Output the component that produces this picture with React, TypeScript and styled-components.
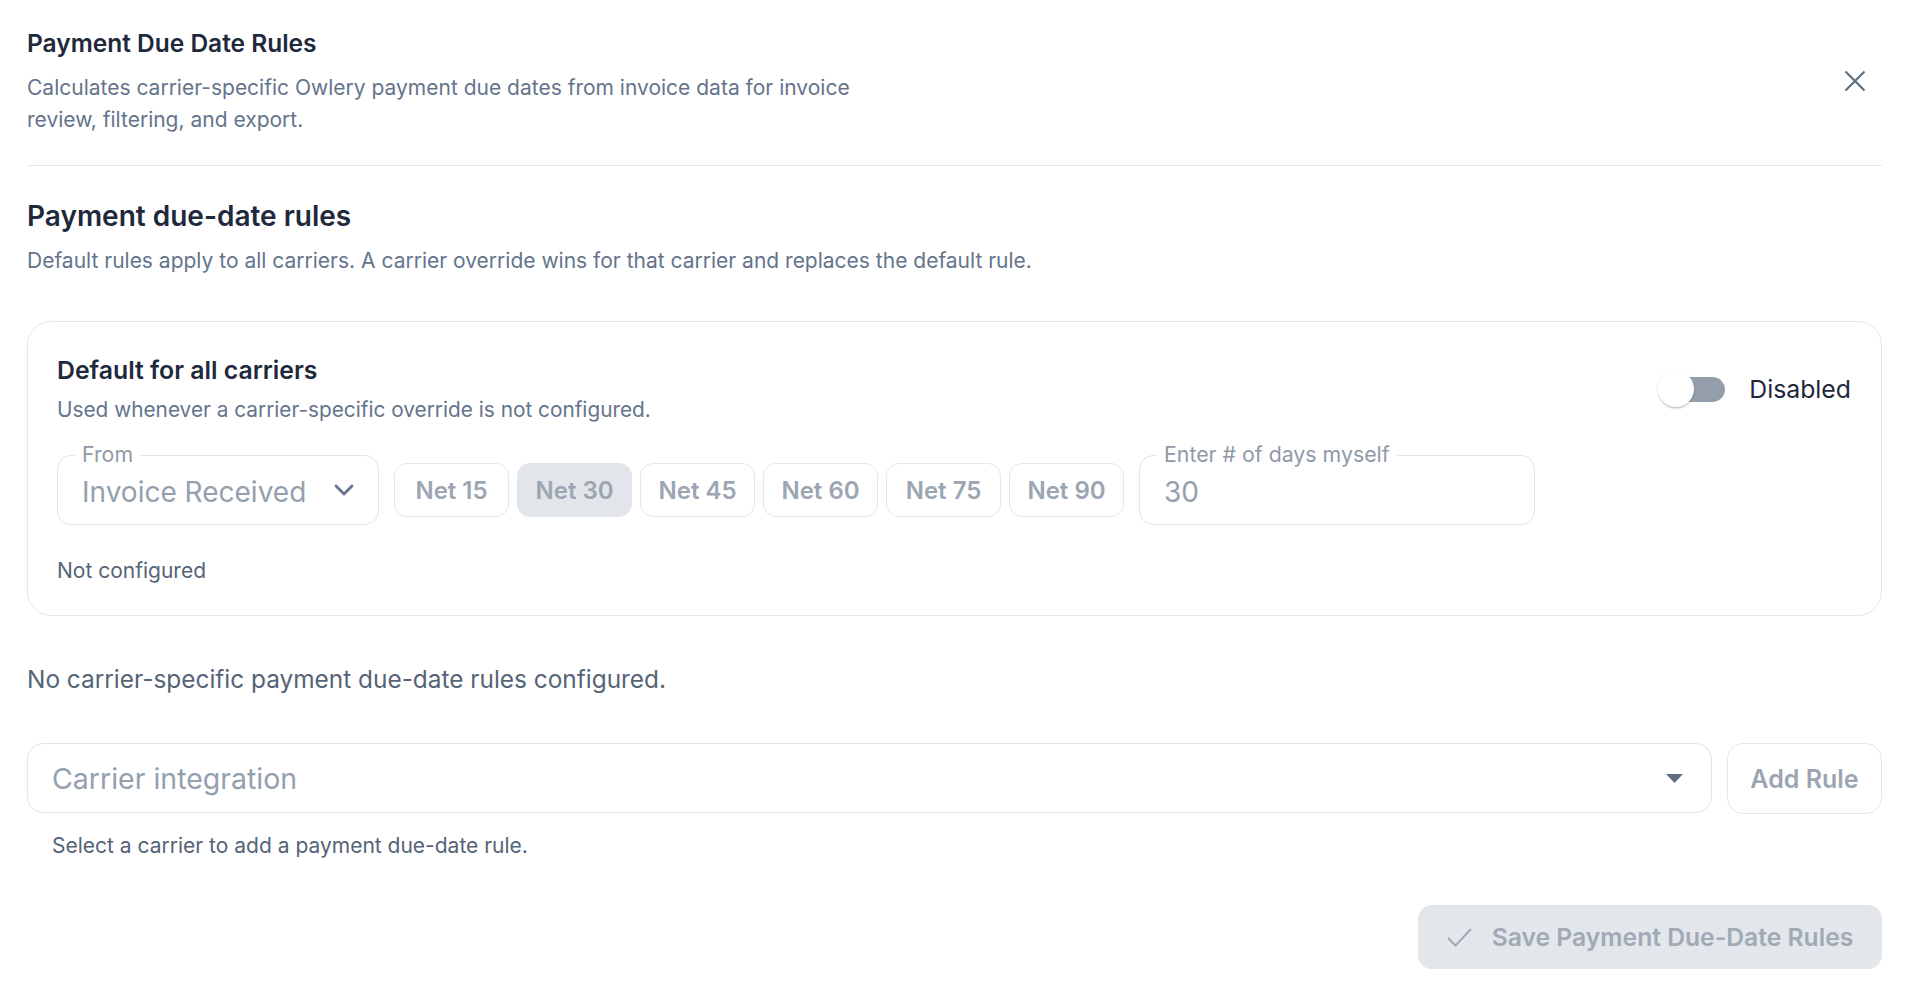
import React from 'react';
import styled, { createGlobalStyle } from 'styled-components';

const GlobalStyle = createGlobalStyle`
  html, body {
    margin: 0;
    padding: 0;
    background: #ffffff;
  }
  body {
    font-family: Inter, "Noto Sans", "Liberation Sans", sans-serif;
    color: #1e293b;
  }
  * {
    box-sizing: border-box;
  }
`;

const Page = styled.div`
  padding: 28px 30px 17px 27px;
  display: flex;
  flex-direction: column;
`;

const Header = styled.header`
  display: flex;
  align-items: center;
  justify-content: space-between;
  padding-bottom: 29px;
  border-bottom: 1px solid #e5e7eb;
`;

const HeaderText = styled.div`
  display: flex;
  flex-direction: column;
  gap: 14px;
`;

const Title = styled.h1`
  margin: 0;
  font-size: 24.5px;
  line-height: 30px;
  font-weight: 600;
  color: #1e293b;
`;

const Muted = styled.p<{ $size?: number; $lh?: number; $color?: string }>`
  margin: 0;
  font-size: ${(p) => p.$size ?? 21}px;
  line-height: ${(p) => p.$lh ?? 26}px;
  color: ${(p) => p.$color ?? '#64748b'};
`;

const HeaderDesc = styled(Muted)`
  max-width: 860px;
`;

const CloseButton = styled.button`
  border: 0;
  background: none;
  padding: 0;
  margin: 0 16px 2px 0;
  width: 22px;
  height: 22px;
  display: flex;
  align-items: center;
  justify-content: center;
  color: #5f6f7f;
  cursor: pointer;
`;

const Section = styled.section`
  display: flex;
  flex-direction: column;
  padding-top: 33px;
`;

const SectionTitle = styled.h2`
  margin: 0 0 14px;
  font-size: 28px;
  line-height: 34px;
  font-weight: 600;
  color: #1e293b;
`;

const Card = styled.div`
  margin-top: 46px;
  border: 1px solid #e5e7eb;
  border-radius: 24px;
  padding: 33px 30px 31px 29px;
  display: flex;
  flex-direction: column;
`;

const CardHead = styled.div`
  display: flex;
  align-items: center;
  justify-content: space-between;
`;

const CardHeadText = styled.div`
  display: flex;
  flex-direction: column;
  gap: 12px;
`;

const CardTitle = styled.h3`
  margin: 0;
  font-size: 24.8px;
  line-height: 30px;
  font-weight: 600;
  color: #1e293b;
`;

const ToggleLabel = styled.label`
  display: flex;
  align-items: center;
  gap: 24px;
  font-size: 24.8px;
  color: #1e293b;
`;

const Switch = styled.span`
  position: relative;
  width: 67px;
  height: 36px;
  display: inline-block;
`;

const SwitchTrack = styled.span`
  position: absolute;
  left: 11px;
  top: 6px;
  width: 56px;
  height: 25px;
  border-radius: 13px;
  background: #949fab;
`;

const SwitchKnob = styled.span`
  position: absolute;
  left: 0;
  top: 0;
  width: 36px;
  height: 36px;
  border-radius: 50%;
  background: #ffffff;
  box-shadow: 0 2px 2px -1px rgba(0, 0, 0, 0.2), 0 1px 3px rgba(0, 0, 0, 0.14);
`;

const Controls = styled.div`
  margin-top: 32px;
  display: flex;
  align-items: center;
  gap: 15px;
`;

const Field = styled.div<{ $width: number }>`
  position: relative;
  width: ${(p) => p.$width}px;
  height: 70px;
  border: 1px solid #e2e5e9;
  border-radius: 14px;
  display: flex;
  align-items: center;
  padding: 0 24px;
  justify-content: space-between;
`;

const FloatLabel = styled.span`
  position: absolute;
  left: 17px;
  top: -15px;
  padding: 0 7px;
  background: #ffffff;
  font-size: 21.3px;
  line-height: 26px;
  color: #8f9aa7;
`;

const FieldValue = styled.span`
  font-size: 28px;
  line-height: 34px;
  color: #94a0ad;
  padding-top: 3px;
`;

const NetGroup = styled.div`
  display: flex;
  gap: 8px;
`;

const NetButton = styled.button<{ $active?: boolean }>`
  width: 115px;
  height: 54px;
  border-radius: 13px;
  border: 1px solid ${(p) => (p.$active ? '#e2e6ea' : '#e5e7eb')};
  background: ${(p) => (p.$active ? '#e2e6ea' : '#ffffff')};
  font-family: inherit;
  font-size: 24px;
  font-weight: 600;
  color: #9ca6b2;
  padding: 0;
`;

const Note = styled(Muted)`
  margin-top: 33px;
`;

const EmptyText = styled(Muted)`
  margin-top: 48px;
`;

const AddRow = styled.div`
  margin-top: 49px;
  display: flex;
  gap: 15px;
`;

const CarrierSelect = styled.div`
  flex: 1;
  height: 70px;
  border: 1px solid #e2e5e9;
  border-radius: 16px;
  display: flex;
  align-items: center;
  justify-content: space-between;
  padding: 0 28px 0 24px;
  font-size: 28.5px;
  color: #94a0ad;
`;

const GhostButton = styled.button`
  width: 155px;
  height: 71px;
  border: 1px solid #e5e7eb;
  border-radius: 16px;
  background: #ffffff;
  font-family: inherit;
  font-size: 25px;
  font-weight: 600;
  color: #9ca6b2;
  padding: 0;
`;

const Helper = styled(Muted)`
  margin-top: 20px;
  padding-left: 25px;
  line-height: 24px;
`;

const Footer = styled.div`
  margin-top: 47px;
  display: flex;
  justify-content: flex-end;
`;

const SaveButton = styled.button`
  width: 464px;
  height: 64px;
  border: 0;
  border-radius: 14px;
  background: #e3e7eb;
  display: flex;
  align-items: center;
  justify-content: center;
  gap: 20px;
  font-family: inherit;
  font-size: 24.7px;
  font-weight: 600;
  color: #a0aab6;
  padding: 0 24px;
`;

const netOptions = [15, 30, 45, 60, 75, 90];

export default function App() {
  return (
    <Page>
      <GlobalStyle />
      <Header>
        <HeaderText>
          <Title>Payment Due Date Rules</Title>
          <HeaderDesc $lh={32}>
            Calculates carrier-specific Owlery payment due dates from invoice data for invoice review, filtering, and export.
          </HeaderDesc>
        </HeaderText>
        <CloseButton aria-label="Close">
          <svg width="22" height="22" viewBox="0 0 22 22" fill="none" stroke="currentColor" strokeWidth="2.2">
            <path d="M1.5 1.5 20.5 20.5M20.5 1.5 1.5 20.5" />
          </svg>
        </CloseButton>
      </Header>

      <Section>
        <SectionTitle>Payment due-date rules</SectionTitle>
        <Muted $lh={28}>
          Default rules apply to all carriers. A carrier override wins for that carrier and replaces the default rule.
        </Muted>

        <Card>
          <CardHead>
            <CardHeadText>
              <CardTitle>Default for all carriers</CardTitle>
              <Muted $size={20.8}>Used whenever a carrier-specific override is not configured.</Muted>
            </CardHeadText>
            <ToggleLabel>
              <Switch>
                <SwitchTrack />
                <SwitchKnob />
              </Switch>
              Disabled
            </ToggleLabel>
          </CardHead>

          <Controls>
            <Field $width={322}>
              <FloatLabel>From</FloatLabel>
              <FieldValue>Invoice Received</FieldValue>
              <svg width="20" height="12" viewBox="0 0 20 12" fill="none" stroke="#64748b" strokeWidth="2.8" strokeLinecap="round" strokeLinejoin="round">
                <path d="M2 2 10 10 18 2" />
              </svg>
            </Field>
            <NetGroup>
              {netOptions.map((n) => (
                <NetButton key={n} $active={n === 30}>Net {n}</NetButton>
              ))}
            </NetGroup>
            <Field $width={396}>
              <FloatLabel>Enter # of days myself</FloatLabel>
              <FieldValue>30</FieldValue>
            </Field>
          </Controls>

          <Note $color="#556476">Not configured</Note>
        </Card>

        <EmptyText $size={24.4} $lh={30} $color="#556476">
          No carrier-specific payment due-date rules configured.
        </EmptyText>

        <AddRow>
          <CarrierSelect>
            <span>Carrier integration</span>
            <svg width="17" height="9" viewBox="0 0 17 9">
              <path d="M0 0h17L8.5 9z" fill="#5f6f7f" />
            </svg>
          </CarrierSelect>
          <GhostButton>Add Rule</GhostButton>
        </AddRow>
        <Helper $color="#556476">Select a carrier to add a payment due-date rule.</Helper>

        <Footer>
          <SaveButton>
            <svg width="25" height="20" viewBox="0 0 25 20" fill="none" stroke="#a0aab6" strokeWidth="2">
              <path d="M1 11 8.5 18.5 24 2" />
            </svg>
            Save Payment Due-Date Rules
          </SaveButton>
        </Footer>
      </Section>
    </Page>
  );
}
